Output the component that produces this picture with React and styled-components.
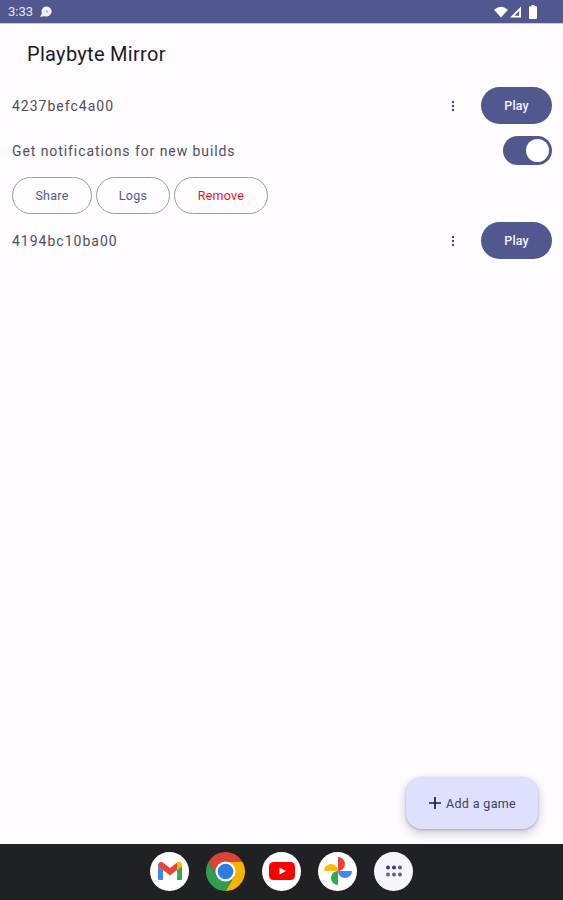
import React from "react";
import styled, { createGlobalStyle } from "styled-components";

const Global = createGlobalStyle`
  html, body { margin: 0; padding: 0; background: #fffcff; }
  * { box-sizing: border-box; }
`;

const Page = styled.div`
  width: 563px;
  height: 900px;
  display: flex;
  flex-direction: column;
  font-family: Roboto, "Liberation Sans", sans-serif;
  background: #fffcff;
  overflow: hidden;
`;

const StatusBar = styled.div`
  height: 23px;
  flex: none;
  background: #51578f;
  display: flex;
  align-items: center;
  justify-content: space-between;
  padding: 0 26px 0 8px;
  color: #e6e7f2;
  font-size: 13px;
  box-shadow: 0 1px 0 #c5cbe0;
`;

const StatusLeft = styled.div`
  display: flex;
  align-items: center;
  gap: 6px;
`;

const StatusRight = styled.div`
  display: flex;
  align-items: center;
  gap: 2px;
`;

const Title = styled.h1`
  margin: 0;
  height: 64px;
  flex: none;
  padding: 0 0 2px 27px;
  display: flex;
  align-items: center;
  font-size: 20px;
  font-weight: 400;
  letter-spacing: 0.3px;
  color: #1b1b1f;
`;

const List = styled.div`
  flex: 1;
  display: flex;
  flex-direction: column;
  padding: 0 11px 0 12px;
`;

const Row = styled.div`
  display: flex;
  align-items: center;
  justify-content: space-between;
  height: ${(p) => p.$height}px;
  margin-bottom: ${(p) => p.$gap || 0}px;
`;

const Label = styled.span`
  font-size: 14px;
  letter-spacing: ${(p) => p.$spacing}px;
  color: #4f4f57;
`;

const Controls = styled.div`
  display: flex;
  align-items: center;
  gap: 26px;
`;

const PlayButton = styled.button`
  width: 71px;
  height: 37px;
  border: none;
  border-radius: 19px;
  background: #51578f;
  color: #f4f4fa;
  font: 500 12.5px Roboto, sans-serif;
  letter-spacing: 0.1px;
  padding: 0;
`;

const Switch = styled.div`
  width: 49px;
  height: 29px;
  border-radius: 15px;
  background: #51578f;
  display: flex;
  align-items: center;
  justify-content: flex-end;
  padding-right: 3px;
`;

const Thumb = styled.div`
  width: 23px;
  height: 23px;
  border-radius: 50%;
  background: #fff;
`;

const Actions = styled.div`
  display: flex;
  gap: 4px;
  height: 37px;
  margin-bottom: 8px;
`;

const Outline = styled.button`
  width: ${(p) => p.$width}px;
  height: 37px;
  border: 1px solid #9a9aa3;
  border-radius: 19px;
  background: transparent;
  color: ${(p) => (p.$danger ? "#f8101c" : "#51578f")};
  font: 400 12.5px Roboto, sans-serif;
  letter-spacing: 0.25px;
  padding: 0;
`;

const FabArea = styled.div`
  flex: none;
  display: flex;
  justify-content: flex-end;
  padding: 0 25px 15px 0;
`;

const Fab = styled.button`
  width: 132px;
  height: 52px;
  border: none;
  border-radius: 16px;
  background: #dfe0ff;
  color: #3a3d62;
  display: flex;
  align-items: center;
  justify-content: center;
  gap: 4px;
  padding: 0;
  font: 400 12.5px Roboto, sans-serif;
  letter-spacing: 0.35px;
  box-shadow: 0 4px 8px 2px rgba(0, 0, 0, 0.14), 0 1px 3px rgba(0, 0, 0, 0.24);
`;

const NavBar = styled.div`
  height: 56px;
  flex: none;
  background: #202124;
  display: flex;
  align-items: center;
  justify-content: center;
  gap: 17px;
  padding-bottom: 2px;
`;

const Dock = styled.div`
  width: 39px;
  height: 39px;
  border-radius: 50%;
  background: ${(p) => p.$bg || "#fff"};
  display: flex;
  align-items: center;
  justify-content: center;
  flex: none;
`;

const MoreDots = () => (
  <svg width="4" height="12" viewBox="0 0 4 12">
    <circle cx="2" cy="2" r="1.2" fill="#3f4580" />
    <circle cx="2" cy="6" r="1.2" fill="#3f4580" />
    <circle cx="2" cy="10" r="1.2" fill="#3f4580" />
  </svg>
);

const Gmail = () => (
  <svg width="26" height="20" viewBox="0 0 26 20">
    <path d="M1 5v13a1 1 0 0 0 1 1h4V9z" fill="#4285f4" />
    <path d="M25 5v13a1 1 0 0 1-1 1h-4V9z" fill="#34a853" />
    <path d="M1 5c0-3.500 3-5 5.500-3L13 7l6.500-5C22 0 25 1.500 25 5l-5 4-7 5.500L6 9z" fill="#ea4335" />
    <path d="M20 9V2.800L19.500 2C22 0 25 1.500 25 5z" fill="#fbbc04" />
  </svg>
);

const Chrome = () => (
  <svg width="39" height="39" viewBox="0 0 38 38">
    <path d="M2.550 9.500A19 19 0 0 1 35.450 9.500H19V19L10.800 23.750z" fill="#db4437" />
    <path d="M35.450 9.500A19 19 0 0 1 19 38L27.200 23.750 19 19V9.500z" fill="#f4b400" />
    <path d="M19 38A19 19 0 0 1 2.550 9.500L10.800 23.750 19 19l8.200 4.750z" fill="#2f9e4f" />
    <circle cx="19" cy="19" r="9.800" fill="#fff" />
    <circle cx="19" cy="19" r="7.600" fill="#2f7de1" />
  </svg>
);

const Youtube = () => (
  <svg width="26" height="18" viewBox="0 0 26 18">
    <rect x="0" y="0" width="26" height="18" rx="4.500" fill="#f00" />
    <path d="M10.500 5.500l6.500 3.500-6.500 3.500z" fill="#fff" />
  </svg>
);

const Photos = () => (
  <svg width="28" height="28" viewBox="0 0 30 30">
    <path d="M15 15H0a7.500 7.500 0 0 1 15 0z" fill="#fbbc04" />
    <path d="M15 15V0a7.500 7.500 0 0 1 0 15z" fill="#ea4335" />
    <path d="M15 15h15a7.500 7.500 0 0 1-15 0z" fill="#4285f4" />
    <path d="M15 15v15a7.500 7.500 0 0 1 0-15z" fill="#34a853" />
  </svg>
);

const AppsGrid = () => (
  <svg width="18" height="12" viewBox="0 0 18 12">
    {[3, 9, 15].map((x) =>
      [2.5, 9.5].map((y) => (
        <circle
          key={`${x}-${y}`}
          cx={x}
          cy={y}
          r="2"
          fill={y === 9.5 ? "#63648a" : x === 15 ? "#6c4f7a" : "#2e3a86"}
        />
      ))
    )}
  </svg>
);

const GameRow = ({ id, gap }) => (
  <Row $height={37} $gap={gap}>
    <Label $spacing={1}>{id}</Label>
    <Controls>
      <MoreDots />
      <PlayButton>Play</PlayButton>
    </Controls>
  </Row>
);

const App = () => {
  return (
    <Page>
      <Global />
      <StatusBar>
        <StatusLeft>
          3:33
          <svg width="13" height="11" viewBox="0 0 13 11">
            <path d="M7.500 0.500a5 5 0 1 1-1.600 9.700L1 10.800l1.900-3.300A5 5 0 0 1 7.500 0.500z" fill="#f4f4fa" />
            <circle cx="8" cy="5.500" r="1.300" fill="#b9bcd6" />
          </svg>
        </StatusLeft>
        <StatusRight>
          <svg width="14" height="12" viewBox="0 0 15 12">
            <path d="M0 3.500Q7.500-2.500 15 3.500L7.500 12z" fill="#fff" />
          </svg>
          <svg width="11" height="12" viewBox="0 0 12 12">
            <path d="M12 0v12H0zM10 4.500L5 10h5z" fill="#fff" fillRule="evenodd" />
          </svg>
          <svg width="8" height="14" viewBox="0 0 8 14" style={{ marginLeft: 6 }}>
            <path d="M2.500 0h3v1.200H7a1 1 0 0 1 1 1V13a1 1 0 0 1-1 1H1a1 1 0 0 1-1-1V2.200a1 1 0 0 1 1-1h1.500z" fill="#fff" />
          </svg>
        </StatusRight>
      </StatusBar>
      <Title>Playbyte Mirror</Title>
      <List>
        <GameRow id="4237befc4a00" gap={12} />
        <Row $height={29} $gap={12}>
          <Label $spacing={0.92}>Get notifications for new builds</Label>
          <Switch>
            <Thumb />
          </Switch>
        </Row>
        <Actions>
          <Outline $width={80}>Share</Outline>
          <Outline $width={74}>Logs</Outline>
          <Outline $width={94} $danger>
            Remove
          </Outline>
        </Actions>
        <GameRow id="4194bc10ba00" />
      </List>
      <FabArea>
        <Fab>
          <svg width="14" height="14" viewBox="0 0 14 14">
            <path d="M7 1v12M1 7h12" stroke="#1b1b3a" strokeWidth="1.700" />
          </svg>
          Add a game
        </Fab>
      </FabArea>
      <NavBar>
        <Dock>
          <Gmail />
        </Dock>
        <Dock $bg="transparent">
          <Chrome />
        </Dock>
        <Dock>
          <Youtube />
        </Dock>
        <Dock>
          <Photos />
        </Dock>
        <Dock $bg="#f5f5fb">
          <AppsGrid />
        </Dock>
      </NavBar>
    </Page>
  );
};

export default App;
